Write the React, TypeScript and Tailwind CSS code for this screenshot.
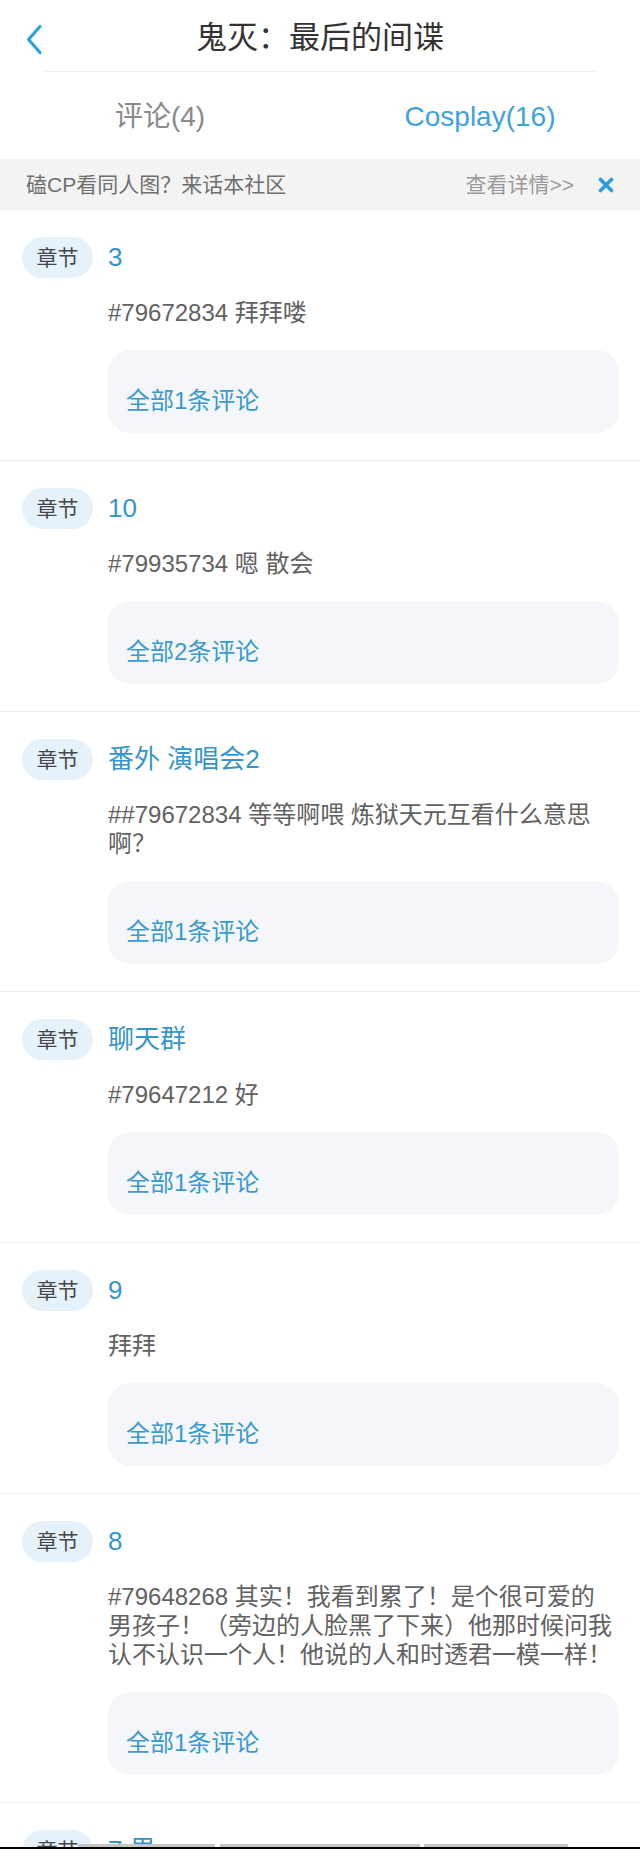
import React from 'react';

type Item = {
  title: string;
  text: string;
  count: number;
};

const items: Item[] = [
  { title: '3', text: '#79672834 拜拜喽', count: 1 },
  { title: '10', text: '#79935734 嗯 散会', count: 2 },
  { title: '番外 演唱会2', text: '##79672834 等等啊喂 炼狱天元互看什么意思啊？', count: 1 },
  { title: '聊天群', text: '#79647212 好', count: 1 },
  { title: '9', text: '拜拜', count: 1 },
  {
    title: '8',
    text: '#79648268 其实！我看到累了！是个很可爱的男孩子！（旁边的人脸黑了下来）他那时候问我认不认识一个人！他说的人和时透君一模一样！',
    count: 1,
  },
  { title: '7 男', text: '#79648268 好的', count: 1 },
];

const ChapterCard: React.FC<{ item: Item }> = ({ item }) => (
  <div className="pl-[22px] pr-[21px] pt-[27px] pb-[27px] border-b border-[#ececec]">
    <div className="flex items-center gap-[15px]">
      <span className="h-[41px] px-[14.5px] flex items-center rounded-full bg-[#e6f2fb] text-[21px] text-[#474747]">
        章节
      </span>
      <span className="text-[26px] leading-[41px] text-[#3595ca]">{item.title}</span>
    </div>
    <p className="ml-[86px] pr-[6px] mt-[20px] text-[24px] leading-[29px] text-[#626262]">
      {item.text}
    </p>
    <div className="ml-[86px] mt-[23px] h-[83px] rounded-[22px] bg-[#f4f6f9] pl-[18px] pt-[36px]">
      <span className="block text-[24px] leading-[29px] text-[#3a9ad0]">全部{item.count}条评论</span>
    </div>
  </div>
);

export default function App() {
  return (
    <div className="relative h-[1849px] overflow-hidden bg-white font-['Liberation_Sans','Noto_Sans_CJK_SC',sans-serif]">
      {/* top bar */}
      <div className="relative h-[71px] flex items-center justify-center pt-[6px]">
        <button aria-label="返回" className="absolute left-[24px] top-[23px] w-[20px] h-[32px] flex items-center justify-center">
          <svg width="18" height="31" viewBox="0 0 18 31" fill="none">
            <path d="M15 2.5 L3.5 15.5 L15 28.5" stroke="#2f9fe0" strokeWidth="3.2" strokeLinecap="round" strokeLinejoin="round" />
          </svg>
        </button>
        <h1 className="text-[31px] text-[#333]">鬼灭：最后的间谍</h1>
      </div>
      <div className="mx-[44px] h-px bg-[#f1f1f1]"></div>

      {/* tabs */}
      <div className="flex h-[87px] items-center pt-[3px]">
        <div className="flex-1 text-center text-[28px] text-[#8a8a8a]">评论(4)</div>
        <div className="flex-1 text-center text-[28px] text-[#3ea3dc]">Cosplay(16)</div>
      </div>

      {/* banner */}
      <div className="h-[51px] flex items-center bg-[#f3f3f3] pl-[26px] pr-[26px]">
        <span className="text-[21px] text-[#6f6f6f]">磕CP看同人图？来话本社区</span>
        <span className="ml-auto text-[21px] text-[#9a9a9a]">查看详情&gt;&gt;</span>
        <svg className="ml-[24px]" width="16" height="16" viewBox="0 0 16 16">
          <path d="M2.5 2.5 L13.5 13.5 M13.5 2.5 L2.5 13.5" stroke="#2d9be0" strokeWidth="3.6" strokeLinecap="round" />
        </svg>
      </div>

      {items.map((item, i) => (
        <ChapterCard key={i} item={item} />
      ))}

      {/* bottom strip of the capture */}
      <div className="absolute left-0 right-0 bottom-0">
        <div className="relative h-[3px]">
          <div className="absolute top-0 left-[78px] w-[137px] h-[3px] bg-[#c6c6c6]"></div>
          <div className="absolute top-0 left-[220px] w-[200px] h-[3px] bg-[#c6c6c6]"></div>
          <div className="absolute top-0 left-[424px] w-[144px] h-[3px] bg-[#c6c6c6]"></div>
        </div>
        <div className="h-[2px] bg-black"></div>
      </div>
    </div>
  );
}
